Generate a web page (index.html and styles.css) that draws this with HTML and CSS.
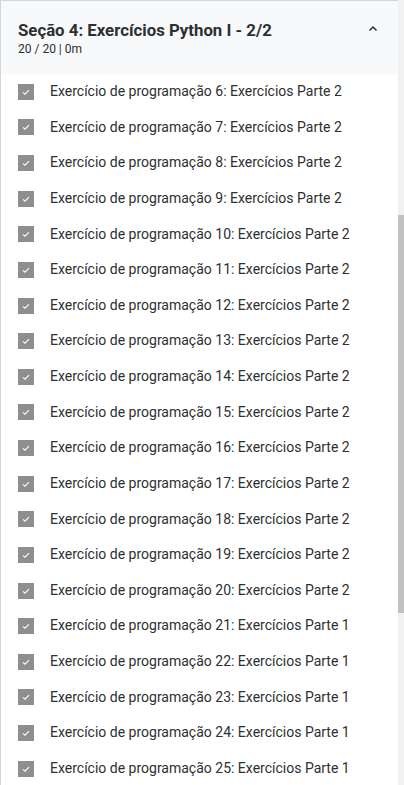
FILE: index.html
```html
<!DOCTYPE html>
<html lang="pt">
<head>
<meta charset="utf-8">
<link rel="stylesheet" href="styles.css">
</head>
<body>
<div class="frame">
  <div class="panel">
    <div class="section-head">
      <div class="head-text">
        <div class="title">Seção 4: Exercícios Python I - 2/2</div>
        <div class="meta">20 / 20 | 0m</div>
      </div>
      <svg class="chev" width="12" height="12" viewBox="0 0 12 12"><path d="M2.5 7.5 L6 4 L9.5 7.5" fill="none" stroke="#2d2f31" stroke-width="1.5"/></svg>
    </div>
    <ul class="items">
      <li class="item"><span class="box"><svg width="16" height="16" viewBox="0 0 16 16"><path d="M5 8.4 L7 10.2 L11 6.2" fill="none" stroke="#fff" stroke-width="1.1"/></svg></span><span class="label">Exercício de programação 6: Exercícios Parte 2</span></li>
      <li class="item"><span class="box"><svg width="16" height="16" viewBox="0 0 16 16"><path d="M5 8.4 L7 10.2 L11 6.2" fill="none" stroke="#fff" stroke-width="1.1"/></svg></span><span class="label">Exercício de programação 7: Exercícios Parte 2</span></li>
      <li class="item"><span class="box"><svg width="16" height="16" viewBox="0 0 16 16"><path d="M5 8.4 L7 10.2 L11 6.2" fill="none" stroke="#fff" stroke-width="1.1"/></svg></span><span class="label">Exercício de programação 8: Exercícios Parte 2</span></li>
      <li class="item"><span class="box"><svg width="16" height="16" viewBox="0 0 16 16"><path d="M5 8.4 L7 10.2 L11 6.2" fill="none" stroke="#fff" stroke-width="1.1"/></svg></span><span class="label">Exercício de programação 9: Exercícios Parte 2</span></li>
      <li class="item"><span class="box"><svg width="16" height="16" viewBox="0 0 16 16"><path d="M5 8.4 L7 10.2 L11 6.2" fill="none" stroke="#fff" stroke-width="1.1"/></svg></span><span class="label">Exercício de programação 10: Exercícios Parte 2</span></li>
      <li class="item"><span class="box"><svg width="16" height="16" viewBox="0 0 16 16"><path d="M5 8.4 L7 10.2 L11 6.2" fill="none" stroke="#fff" stroke-width="1.1"/></svg></span><span class="label">Exercício de programação 11: Exercícios Parte 2</span></li>
      <li class="item"><span class="box"><svg width="16" height="16" viewBox="0 0 16 16"><path d="M5 8.4 L7 10.2 L11 6.2" fill="none" stroke="#fff" stroke-width="1.1"/></svg></span><span class="label">Exercício de programação 12: Exercícios Parte 2</span></li>
      <li class="item"><span class="box"><svg width="16" height="16" viewBox="0 0 16 16"><path d="M5 8.4 L7 10.2 L11 6.2" fill="none" stroke="#fff" stroke-width="1.1"/></svg></span><span class="label">Exercício de programação 13: Exercícios Parte 2</span></li>
      <li class="item"><span class="box"><svg width="16" height="16" viewBox="0 0 16 16"><path d="M5 8.4 L7 10.2 L11 6.2" fill="none" stroke="#fff" stroke-width="1.1"/></svg></span><span class="label">Exercício de programação 14: Exercícios Parte 2</span></li>
      <li class="item"><span class="box"><svg width="16" height="16" viewBox="0 0 16 16"><path d="M5 8.4 L7 10.2 L11 6.2" fill="none" stroke="#fff" stroke-width="1.1"/></svg></span><span class="label">Exercício de programação 15: Exercícios Parte 2</span></li>
      <li class="item"><span class="box"><svg width="16" height="16" viewBox="0 0 16 16"><path d="M5 8.4 L7 10.2 L11 6.2" fill="none" stroke="#fff" stroke-width="1.1"/></svg></span><span class="label">Exercício de programação 16: Exercícios Parte 2</span></li>
      <li class="item"><span class="box"><svg width="16" height="16" viewBox="0 0 16 16"><path d="M5 8.4 L7 10.2 L11 6.2" fill="none" stroke="#fff" stroke-width="1.1"/></svg></span><span class="label">Exercício de programação 17: Exercícios Parte 2</span></li>
      <li class="item"><span class="box"><svg width="16" height="16" viewBox="0 0 16 16"><path d="M5 8.4 L7 10.2 L11 6.2" fill="none" stroke="#fff" stroke-width="1.1"/></svg></span><span class="label">Exercício de programação 18: Exercícios Parte 2</span></li>
      <li class="item"><span class="box"><svg width="16" height="16" viewBox="0 0 16 16"><path d="M5 8.4 L7 10.2 L11 6.2" fill="none" stroke="#fff" stroke-width="1.1"/></svg></span><span class="label">Exercício de programação 19: Exercícios Parte 2</span></li>
      <li class="item"><span class="box"><svg width="16" height="16" viewBox="0 0 16 16"><path d="M5 8.4 L7 10.2 L11 6.2" fill="none" stroke="#fff" stroke-width="1.1"/></svg></span><span class="label">Exercício de programação 20: Exercícios Parte 2</span></li>
      <li class="item"><span class="box"><svg width="16" height="16" viewBox="0 0 16 16"><path d="M5 8.4 L7 10.2 L11 6.2" fill="none" stroke="#fff" stroke-width="1.1"/></svg></span><span class="label">Exercício de programação 21: Exercícios Parte 1</span></li>
      <li class="item"><span class="box"><svg width="16" height="16" viewBox="0 0 16 16"><path d="M5 8.4 L7 10.2 L11 6.2" fill="none" stroke="#fff" stroke-width="1.1"/></svg></span><span class="label">Exercício de programação 22: Exercícios Parte 1</span></li>
      <li class="item"><span class="box"><svg width="16" height="16" viewBox="0 0 16 16"><path d="M5 8.4 L7 10.2 L11 6.2" fill="none" stroke="#fff" stroke-width="1.1"/></svg></span><span class="label">Exercício de programação 23: Exercícios Parte 1</span></li>
      <li class="item"><span class="box"><svg width="16" height="16" viewBox="0 0 16 16"><path d="M5 8.4 L7 10.2 L11 6.2" fill="none" stroke="#fff" stroke-width="1.1"/></svg></span><span class="label">Exercício de programação 24: Exercícios Parte 1</span></li>
      <li class="item"><span class="box"><svg width="16" height="16" viewBox="0 0 16 16"><path d="M5 8.4 L7 10.2 L11 6.2" fill="none" stroke="#fff" stroke-width="1.1"/></svg></span><span class="label">Exercício de programação 25: Exercícios Parte 1</span></li>
    </ul>
  </div>
  <div class="scrollbar">
    <div class="track-top"></div>
    <div class="thumb"></div>
  </div>
</div>
</body>
</html>
```
FILE: styles.css
```css
* { box-sizing: border-box; }
html, body { margin: 0; padding: 0; }
body {
  background: #fff;
  font-family: Roboto, "Liberation Sans", sans-serif;
  color: #2d2f31;
  overflow: hidden;
}
.frame {
  display: flex;
  width: 404px;
  height: 785px;
  overflow: hidden;
}
.panel {
  width: 398px;
  flex: none;
  border-top: 1px solid #d1d7dc;
  border-left: 1px solid #d1d7dc;
}
.section-head {
  background: #f7f9fa;
  display: flex;
  align-items: flex-start;
  justify-content: space-between;
  padding: 18px 19px 14px 17px;
  height: 73px;
}
.title {
  font-size: 16.8px;
  font-weight: 700;
  line-height: 22px;
}
.meta {
  font-size: 12px;
  line-height: 16.8px;
}
.chev { margin-top: 4px; }
.items {
  list-style: none;
  margin: 0;
  padding: 0;
}
.item {
  display: flex;
  align-items: center;
  padding: 8px 16px 8px 17px;
  font-size: 14px;
  line-height: 19.63px;
}
.box {
  width: 16px;
  height: 16px;
  background: #8e8e8e;
  display: flex;
  flex: none;
  margin-right: 16px;
}
.scrollbar {
  width: 6px;
  flex: none;
  background: #f1f1f1;
  display: flex;
  flex-direction: column;
}
.track-top {
  height: 215px;
  flex: none;
}
.thumb {
  height: 398px;
  background: #c1c1c1;
  flex: none;
}
```
